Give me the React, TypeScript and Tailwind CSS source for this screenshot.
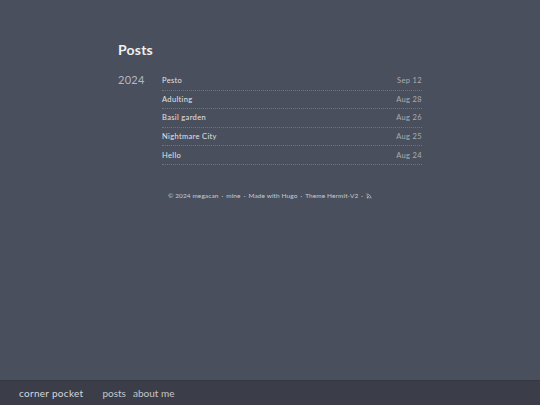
import React from "react";

interface Post {
    title: string;
    date: string;
}

const posts: Post[] = [
    { title: "Pesto", date: "Sep 12" },
    { title: "Adulting", date: "Aug 28" },
    { title: "Basil garden", date: "Aug 26" },
    { title: "Nightmare City", date: "Aug 25" },
    { title: "Hello", date: "Aug 24" },
];

const RssIcon = () => (
    <svg width="6" height="6" viewBox="0 0 24 24" fill="none" stroke="currentColor" strokeWidth="3" strokeLinecap="round">
        <path d="M4 11a9 9 0 0 1 9 9" />
        <path d="M4 4a16 16 0 0 1 16 16" />
        <circle cx="5" cy="19" r="1" />
    </svg>
);

export default function App() {
    return (
        <div
            className="flex flex-col min-h-screen bg-[#494f5c] text-[#eeeeee]"
            style={{ fontFamily: "Lato, 'Open Sans', sans-serif" }}
        >
            <main className="grow">
                <div className="w-[304px] mx-auto pt-[40px]">
                    <h1 className="text-[14px] font-bold leading-[20px] text-[#f0f0f0] tracking-[0.2px]">Posts</h1>
                    <div className="flex mt-[12px]">
                        <div className="w-[44px] text-[11px] leading-[14px] text-[#b4b8c0] pt-[1px] tracking-[0.3px]">2024</div>
                        <ul className="flex-1">
                            {posts.map((post) => (
                                <li
                                    key={post.title}
                                    className="flex justify-between items-center h-[18.6px] border-b border-dotted border-[#6f7480] text-[7.5px] tracking-[0.35px]"
                                >
                                    <span className="text-[#e2e2e2]">{post.title}</span>
                                    <span className="text-[#a9adb5]">{post.date}</span>
                                </li>
                            ))}
                        </ul>
                    </div>
                    <div className="flex justify-center items-center gap-[3px] mt-[26px] text-[6.5px] tracking-[0.1px] text-[#c8cbd1]">
                        <span>© 2024 megacan</span>
                        <span>·</span>
                        <span>mine</span>
                        <span>·</span>
                        <span>Made with Hugo</span>
                        <span>·</span>
                        <span>Theme Hermit-V2</span>
                        <span>·</span>
                        <RssIcon />
                    </div>
                </div>
            </main>
            <footer className="h-[25px] bg-[#3b3e48] border-t border-[#353841] flex items-center px-[19px] text-[10px] text-[#d6d8dc]">
                <span className="mr-[19px] tracking-[0.3px]">corner pocket</span>
                <span className="mr-[7px] text-[#c3c6cc]">posts</span>
                <span className="text-[#c3c6cc]">about me</span>
            </footer>
        </div>
    );
}
